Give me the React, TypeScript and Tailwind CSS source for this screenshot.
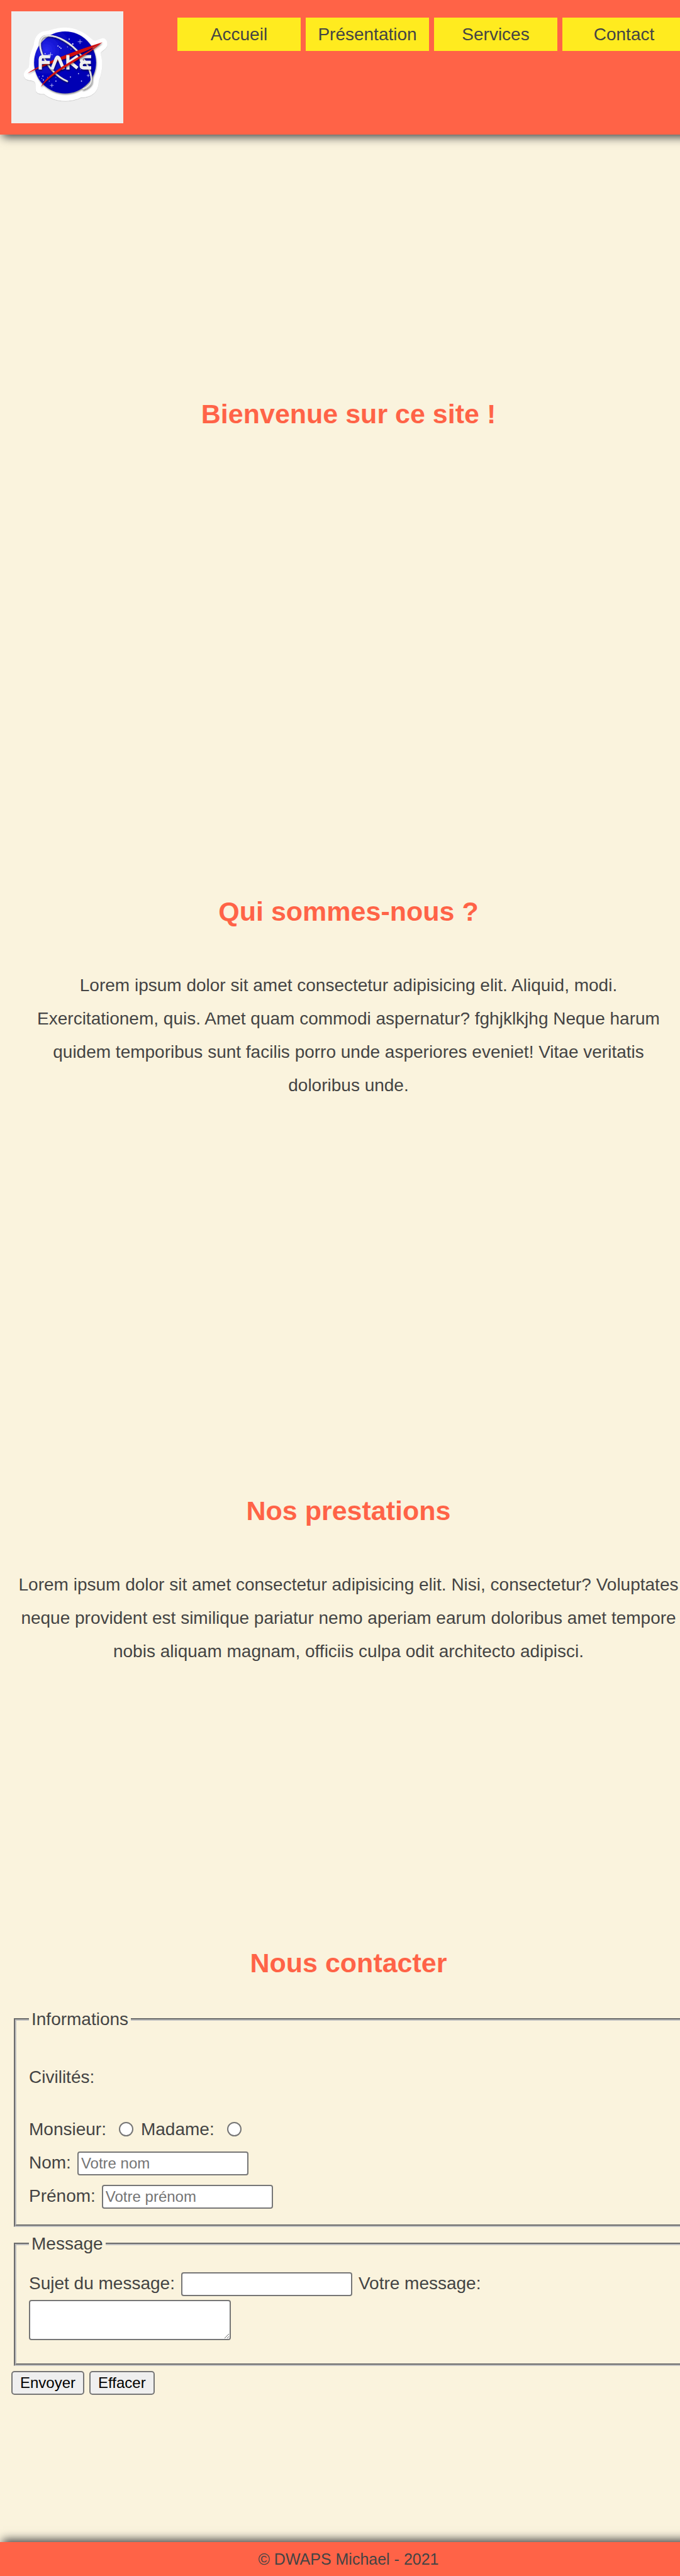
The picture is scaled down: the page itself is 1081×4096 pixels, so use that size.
import React from "react";

const NAV = [
  { href: "#accueil", label: "Accueil" },
  { href: "#presentation", label: "Présentation" },
  { href: "#services", label: "Services" },
  { href: "#contact", label: "Contact" },
];

const STARS: [number, number, number][] = [
  [370, 209, 3], [389, 235, 4], [310, 246, 3], [319, 252, 3], [326, 258, 3],
  [361, 251, 2], [380, 262, 2], [241, 287, 3], [229, 407, 3], [254, 414, 2],
  [223, 420, 2], [232, 428, 3], [209, 411, 2], [299, 414, 2], [299, 434, 3],
  [263, 434, 2], [377, 412, 3], [420, 394, 3], [436, 434, 3], [430, 371, 2],
];

const SPARKLES: [number, number, number][] = [
  [428, 223, 12], [270, 292, 12], [277, 457, 10], [472, 404, 8],
];

function Logo() {
  return (
    <svg viewBox="60 60 600 600" className="h-[178px] w-[178px] shrink-0 bg-[#eeeeee]" role="img" aria-label="Fake">
      <defs>
        <radialGradient id="planet" cx="0.2" cy="0.3" r="0.6">
          <stop offset="0" stopColor="#2b2bf0" />
          <stop offset="0.45" stopColor="#0a0ac6" />
          <stop offset="1" stopColor="#0000b4" />
        </radialGradient>
        <filter id="soft" x="-20%" y="-20%" width="140%" height="140%">
          <feDropShadow dx="2" dy="5" stdDeviation="4" floodColor="#000" floodOpacity="0.55" />
        </filter>
        <filter id="edge" x="-10%" y="-10%" width="120%" height="120%">
          <feDropShadow dx="0" dy="2" stdDeviation="2" floodColor="#000" floodOpacity="0.25" />
        </filter>
      </defs>
      <path
        filter="url(#edge)"
        fill="#fff"
        d="M350 147C400 147 450 170 488 206C498 215 505 219 514 216L545 205C566 200 578 222 574 243C568 262 548 270 540 281C535 290 546 302 547 340C547 380 538 410 530 430C527 445 528 460 518 480C505 507 470 523 432 522C410 533 380 540 350 540C305 540 265 525 235 502C215 505 195 500 191 483C189 462 193 446 183 437C170 425 140 437 128 410C122 385 140 375 152 362C158 350 153 322 160 300C165 270 181 250 181 230C186 195 210 168 240 166C275 164 290 147 350 147Z"
      />
      <circle cx="348" cy="334" r="166" fill="url(#planet)" filter="url(#soft)" />
      <g fill="#eef">
        {STARS.map(([x, y, r]) => (
          <circle key={`${x}-${y}`} cx={x} cy={y} r={r} />
        ))}
      </g>
      <g stroke="#dfe3ff" strokeWidth="2.5">
        {SPARKLES.map(([x, y, r]) => (
          <path key={`${x}-${y}`} d={`M${x - r} ${y}h${r * 2}M${x} ${y - r}v${r * 2}`} />
        ))}
      </g>
      <g fill="none" strokeLinecap="round" filter="url(#soft)">
        <path d="M360 435C290 405 250 345 226 292C210 250 205 205 240 193C305 180 385 235 430 292C470 340 495 400 489 440C483 460 465 470 445 477" stroke="#b9b9b9" strokeWidth="10" />
        <path d="M359 434C289 403 250 343 225 290C209 248 206 205 240 192C305 179 385 234 430 291C470 340 493 400 487 438C481 458 465 468 445 475" stroke="#f4f4f4" strokeWidth="5" />
      </g>
      <path d="M147 393C210 345 380 278 548 226C440 298 260 332 147 393Z" fill="#cf0b0b" filter="url(#soft)" />
      <g fill="none" stroke="#f0f0f0" strokeWidth="17" filter="url(#soft)">
        <path d="M215 372V318Q215 303 230 303H268M222 334H266" />
        <path d="M278 370L301 312Q308 298 316 312L340 370" />
        <path d="M363 294V372M417 300L374 331L414 364" />
        <path d="M488 303H447Q434 303 434 317Q434 333 449 333H486M449 333Q434 335 434 349Q434 363 448 363H488" />
      </g>
      <path d="M218 466C265 375 400 325 548 226C425 330 295 372 218 466Z" fill="#cf0b0b" filter="url(#soft)" />
      <path d="M236 440C290 378 420 318 520 247" fill="none" stroke="#e0241a" strokeWidth="2" />
    </svg>
  );
}

function Title({ children }: { children: React.ReactNode }) {
  return <h2 className="text-center text-[43px] leading-[54px] font-bold text-[#ff6347]">{children}</h2>;
}

const field = "h-[38px] w-[272px] rounded-[4px] border-2 border-[#767676] bg-white px-1 text-2xl text-black placeholder:text-[#757575]";
const radio = "mx-1 h-[23px] w-[23px] appearance-none rounded-full border-2 border-[#767676] bg-white checked:border-[6px] checked:border-[#0075ff]";
const fieldset = "mx-1 border-4 border-[#c0c0c0] [border-style:groove] px-5";
const button = "h-[38px] rounded-[5px] border-2 border-[#767676] bg-[#efefef] px-3 text-2xl leading-none text-black";

export default function App() {
  return (
    <div className="overflow-x-clip bg-[#faf3dd] font-['Liberation_Sans',Arial,sans-serif] text-[28px] leading-[53px] text-[#444444]">
      <div className="min-w-[1108px]">
        <header className="flex items-start justify-between bg-[#ff6347] p-[18px] shadow-[4px_4px_14px_#444444]">
          <Logo />
          <nav className="mt-[10px] flex gap-2">
            {NAV.map((item) => (
              <a key={item.href} href={item.href} className="w-[196px] bg-[#ffeb1f] text-center">
                {item.label}
              </a>
            ))}
          </nav>
        </header>

        <main className="px-[18px]">
          <section id="accueil" className="pt-[417px]">
            <Title>Bienvenue sur ce site !</Title>
          </section>

          <section id="presentation" className="pt-[737px]">
            <Title>Qui sommes-nous ?</Title>
            <p className="mt-16 px-6 text-center">
              Lorem ipsum dolor sit amet consectetur adipisicing elit. Aliquid, modi. Exercitationem, quis. Amet quam
              commodi aspernatur? fghjklkjhg Neque harum quidem temporibus sunt facilis porro unde asperiores eveniet!
              Vitae veritatis doloribus unde.
            </p>
          </section>

          <section id="services" className="pt-[623px]">
            <Title>Nos prestations</Title>
            <p className="mt-16 text-center">
              Lorem ipsum dolor sit amet consectetur adipisicing elit. Nisi, consectetur? Voluptates neque provident est
              similique pariatur nemo aperiam earum doloribus amet tempore nobis aliquam magnam, officiis culpa odit
              architecto adipisci.
            </p>
          </section>

          <section id="contact" className="pt-[442px] pb-[234px]">
            <Title>Nous contacter</Title>
            <form className="mt-9">
              <fieldset className={`${fieldset} pb-[19px]`}>
                <legend className="px-1">Informations</legend>
                <p className="mt-[39px] mb-[29px]">Civilités:</p>
                <div className="flex h-[54px] items-center">
                  <label htmlFor="monsieur" className="mr-4">Monsieur:</label>
                  <input id="monsieur" type="radio" name="civilite" className={radio} />
                  <label htmlFor="madame" className="mr-4 ml-2">Madame:</label>
                  <input id="madame" type="radio" name="civilite" className={radio} />
                </div>
                <div className="flex items-baseline gap-[10px]">
                  <label htmlFor="nom">Nom:</label>
                  <input id="nom" type="text" placeholder="Votre nom" className={field} />
                </div>
                <div className="flex items-baseline gap-[10px]">
                  <label htmlFor="prenom">Prénom:</label>
                  <input id="prenom" type="text" placeholder="Votre prénom" className={field} />
                </div>
              </fieldset>
              <fieldset className={`${fieldset} pb-[37px]`}>
                <legend className="px-1">Message</legend>
                <div className="mt-[10px] flex items-baseline gap-[10px]">
                  <label htmlFor="sujet">Sujet du message:</label>
                  <input id="sujet" type="text" className={field} />
                  <label htmlFor="message">Votre message:</label>
                </div>
                <textarea id="message" className="block h-16 w-[321px] resize rounded-[4px] border-2 border-[#767676] bg-white p-1 text-2xl text-black" />
              </fieldset>
              <div className="mt-2 flex gap-2">
                <button type="submit" className={button}>Envoyer</button>
                <button type="reset" className={button}>Effacer</button>
              </div>
            </form>
          </section>
        </main>

        <footer className="bg-[#ff6347] text-center text-[25px] leading-[54px] shadow-[4px_-4px_14px_#444444]">
          © DWAPS Michael - 2021
        </footer>
      </div>
    </div>
  );
}
